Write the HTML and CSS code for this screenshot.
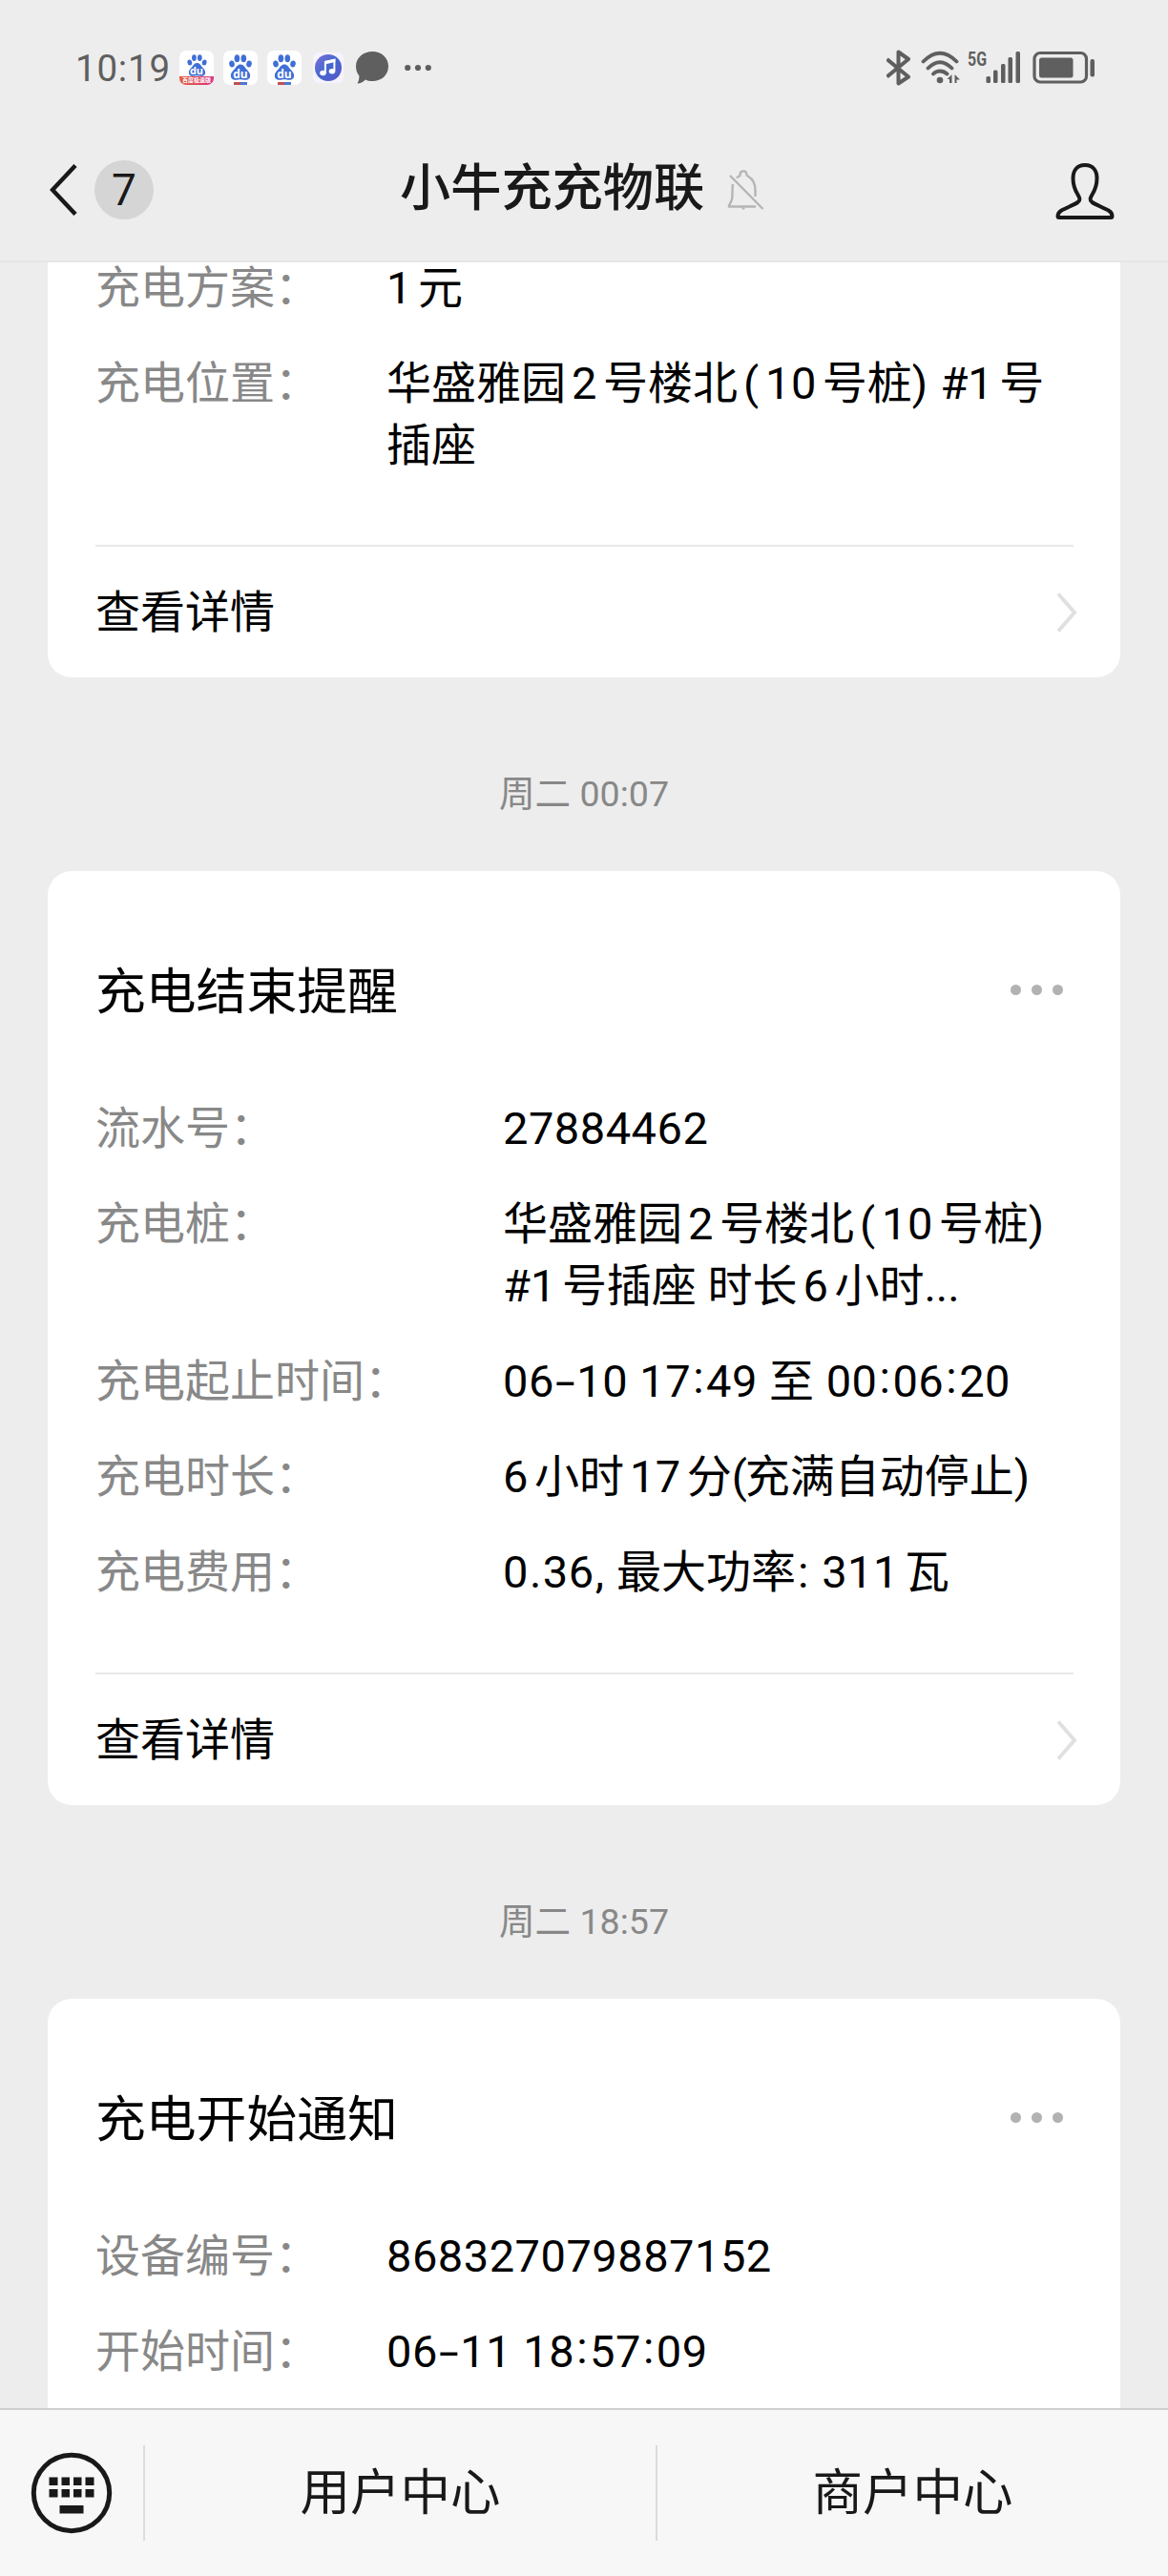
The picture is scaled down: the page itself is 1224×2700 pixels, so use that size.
FILE: index.html
```html
<!DOCTYPE html>
<html lang="zh-CN">
<head>
<meta charset="utf-8">
<title>小牛充充物联</title>
<link rel="stylesheet" href="styles.css">
</head>
<body>
<svg class="defs" aria-hidden="true">
  <symbol id="paw" viewBox="0 0 24 27">
    <g fill="#3f6fd6">
      <ellipse cx="3" cy="10" rx="2.8" ry="3.6" transform="rotate(-12 3 10)"/>
      <ellipse cx="8.4" cy="4.2" rx="2.8" ry="4"/>
      <ellipse cx="15.3" cy="4.2" rx="2.8" ry="4"/>
      <ellipse cx="21" cy="10" rx="2.8" ry="3.6" transform="rotate(12 21 10)"/>
      <path d="M12 10.500c3 0 4.300 2.600 6 4.700 2 2.200 4.200 4 4.200 7 0 3-2.200 4.800-5 4.600-2-.1-3.500-.6-5.200-.6s-3.200.5-5.200.6c-2.800.2-5-1.600-5-4.600 0-3 2.200-4.800 4.200-7 1.700-2.100 3-4.700 6-4.700z"/>
    </g>
  </symbol>
  <symbol id="chev" viewBox="0 0 22 42"><path d="M2 1.500 19 21 2 40.500" fill="none" stroke="#e0e0e0" stroke-width="4"/></symbol>
</svg>
<div class="screen">
  <div class="status">
    <span class="clock">10:19</span>
    <span class="app app-promo"><svg class="paw"><use href="#paw"/></svg><b class="du">du</b><i class="ribbon">百度极速版</i></span>
    <span class="app"><svg class="paw"><use href="#paw"/></svg><b class="du">du</b><i class="stripe"></i></span>
    <span class="app"><svg class="paw"><use href="#paw"/></svg><b class="du">du</b><i class="stripe"></i></span>
    <svg class="music" width="32" height="32" viewBox="0 0 32 32">
      <defs><linearGradient id="mg" x1="0" y1="0" x2="1" y2="1"><stop offset="0" stop-color="#7c6fd8"/><stop offset=".5" stop-color="#4468cf"/><stop offset="1" stop-color="#5b55cc"/></linearGradient></defs>
      <rect width="32" height="32" rx="6" fill="#f6f3fc"/><circle cx="16" cy="16" r="14" fill="url(#mg)"/>
      <g fill="#fff"><ellipse cx="10.500" cy="21.500" rx="3.300" ry="2.700"/><ellipse cx="20" cy="19.800" rx="3.300" ry="2.700"/></g>
      <path d="M12.900 21.500V10L22.400 8v11.500" fill="none" stroke="#fff" stroke-width="2"/><path d="M12 9l11.400-2.400v3.400L12 12.400z" fill="#fff"/>
    </svg>
    <svg class="bubble" width="34" height="34" viewBox="0 0 34 34"><path d="M17.500 0C27 0 34 6.500 34 15.500S27 31 17.500 31c-3 0-5.400-.6-7.500-1.600C8 31.500 5 33.500 1.500 33.500 3 31 3.500 28 3.400 25.500 1.200 22.800 0 19.300 0 15.500 0 6.500 7.500 0 17.500 0z" fill="#5f5f5f"/></svg>
    <svg class="more" width="28" height="8" viewBox="0 0 28 8" fill="#5f5f5f"><circle cx="3.200" cy="4" r="3.100"/><circle cx="14" cy="4" r="3.100"/><circle cx="24.800" cy="4" r="3.100"/></svg>
    <svg class="radio" width="218" height="38" viewBox="929 52 218 38" fill="none" stroke="#5f5f5f">
      <path d="M929.500 62 952 80.500 941.500 87.500V54.500L952 62 929.500 80.500" stroke-width="4" stroke-linejoin="round"/>
      <path d="M967.500 64.500C979 53 991 53 1002.500 64.500M972.500 71.500C981 63 989 63 997.500 71.500M978 77.500C982 73.500 988 73.500 992.500 77.500" stroke-width="3.800" stroke-linecap="round"/>
      <g fill="#5f5f5f" stroke="none">
        <circle cx="985" cy="84" r="3.300"/>
        <path d="M997.500 78v9h-2.500v-4h-2.500zM1000.500 78v9h2v-3.500h3.500z"/>
        <text class="gen" x="1014" y="69" textLength="20" lengthAdjust="spacingAndGlyphs">5G</text>
        <rect x="1033.500" y="80" width="4.500" height="7" rx="1.500"/><rect x="1041" y="73.500" width="4.500" height="13.500" rx="1.500"/><rect x="1049" y="67" width="4.500" height="20" rx="1.500"/><rect x="1056.500" y="60" width="4.500" height="27" rx="1.500"/><rect x="1064.500" y="54" width="4.500" height="33" rx="1.500"/>
        <rect x="1089" y="60.500" width="35.500" height="21" rx="2.500"/><rect x="1142.500" y="62" width="4.500" height="18.500" rx="2"/>
      </g>
      <rect x="1084" y="55.500" width="54.500" height="30.500" rx="6" stroke-width="3.200"/>
    </svg>
  </div>
  <div class="navbar">
    <div class="back">
      <svg width="30" height="54" viewBox="0 0 30 54"><path d="M27 1.500 3 27l24 25.500" fill="none" stroke="#191919" stroke-width="4.500"/></svg>
      <span class="badge">7</span>
    </div>
    <div class="name">小牛充充物联</div>
    <svg class="bell" width="40" height="44" viewBox="0 0 40 44" fill="none" stroke="#b5b5b5" stroke-width="2.400">
      <path d="M10 9.500C12 7.500 13.500 7.500 13.500 6.500 13.500 1 20.500 1 20.500 6.500 20.500 8 29.500 9 29.500 22v7M6 16c-.8 5-.3 10-.8 15C4.500 35 2 37 2 39.500h28M3 7l34.500 35"/><path d="M14.500 40.500h5L17 43z" fill="#b5b5b5" stroke="none"/>
    </svg>
    <svg class="user" width="62" height="60" viewBox="0 0 62 60"><path d="M31 3C22 3 18.500 9.500 18.500 17c0 9 2.500 13 5 17 2 3.500 3 5.500 0 8C20 44.500 12 47.500 6.500 50.500 3 52.500 2.500 54 2.500 56.500q0 1.500 1.500 1.500h54q1.500 0 1.500-1.500c0-2.500-.5-4-4-6C50 47.500 42 44.500 38.500 42c-3-2.500-2-4.500 0-8 2.500-4 5-8 5-17C43.500 9.500 40 3 31 3z" fill="none" stroke="#191919" stroke-width="4"/></svg>
  </div>
  <div class="chat">
    <div class="card card-cut">
      <div class="rows">
        <div class="k">充电方案：</div><div class="v"><span class="n0">1</span>元</div>
        <div class="k">充电位置：</div><div class="v">华盛雅园<span class="n">2</span>号楼北<span class="p">(</span><span class="n1">10</span>号桩<span class="q">)</span> #<span class="n0">1</span>号<br>插座</div>
      </div>
      <div class="detail"><span>查看详情</span><svg width="22" height="42"><use href="#chev"/></svg></div>
    </div>
    <div class="time">周二 00:07</div>
    <div class="card">
      <div class="head"><span class="title">充电结束提醒</span><span class="dots"><i></i><i></i><i></i></span></div>
      <div class="rows wide">
        <div class="k">流水号：</div><div class="v d">27884462</div>
        <div class="k">充电桩：</div><div class="v">华盛雅园<span class="n">2</span>号楼北<span class="p">(</span><span class="n1">10</span>号桩)<br>#<span class="n0">1</span>号插座 时长<span class="n">6</span>小时...</div>
        <div class="k">充电起止时间：</div><div class="v d">06<span class="hy">-</span>10 17<span class="co">:</span>49 至 00<span class="co">:</span>06<span class="co">:</span>20</div>
        <div class="k">充电时长：</div><div class="v"><span class="n0">6</span>小时<span class="n">17</span>分<span class="t">(</span>充满自动停止<span class="t">)</span></div>
        <div class="k">充电费用：</div><div class="v"><span class="d">0<span class="pt">.</span>36<span class="pt">,</span></span> 最大功率<span class="pt2">:</span> <span class="n0">311</span>瓦</div>
      </div>
      <div class="detail"><span>查看详情</span><svg width="22" height="42"><use href="#chev"/></svg></div>
    </div>
    <div class="time">周二 18:57</div>
    <div class="card">
      <div class="head"><span class="title">充电开始通知</span><span class="dots"><i></i><i></i><i></i></span></div>
      <div class="rows">
        <div class="k">设备编号：</div><div class="v d">868327079887152</div>
        <div class="k">开始时间：</div><div class="v d">06<span class="hy">-</span>11 18<span class="co">:</span>57<span class="co">:</span>09</div>
      </div>
    </div>
  </div>
  <div class="tabbar">
    <div class="kbd"><svg width="86" height="86" viewBox="0 0 86 86"><circle cx="43" cy="43" r="39.700" fill="none" stroke="#191919" stroke-width="5"/><path d="M19.500 26.500h9v8.500h-9zM32.500 26.500h8.500v8.500h-8.500zM45 26.500h8.500v8.500H45zM57.500 26.500h9v8.500h-9zM19.500 39h9v8.500h-9zM32.500 39h8.500v8.500h-8.500zM45 39h8.500v8.500H45zM57.500 39h9v8.500h-9zM30.500 56h25v8.500h-25z" fill="#191919"/></svg></div>
    <div class="tab">用户中心</div>
    <div class="tab">商户中心</div>
  </div>
</div>
</body>
</html>
```
FILE: styles.css
```css
* { box-sizing: border-box; }
body { margin: 0; }
.defs { position: absolute; width: 0; height: 0; }
.screen {
  width: 1224px; height: 2700px; overflow: hidden;
  display: flex; flex-direction: column;
  background: #ededed; color: #000;
  font: 47px/65px Roboto, "Noto Sans CJK SC", sans-serif;
  text-autospace: no-autospace; text-spacing-trim: space-all;
}
.screen svg { display: block; flex: none; }

/* status bar */
.status { height: 142px; flex: none; display: flex; align-items: center; padding: 0 77px 0 79px; color: #5f5f5f; }
.clock { width: 109px; font-size: 38.5px; letter-spacing: .8px; white-space: nowrap; }
.app { position: relative; width: 36px; height: 36px; margin-right: 10px; border-radius: 7px; background: #fff; overflow: hidden; display: flex; flex-direction: column; align-items: center; padding-top: 4px; }
.paw { width: 24px; height: 27px; }
.du { position: absolute; left: 0; right: 0; top: 18px; text-align: center; font: 700 12px/14px "Open Sans", sans-serif; color: #fff; }
.stripe { width: 14px; height: 3px; margin-top: 2px; background: linear-gradient(90deg, #c05050 50%, #4878d8 50%); }
.app-promo .paw { width: 21px; height: 23px; }
.app-promo .du { top: 14px; font-size: 11px; }
.ribbon { position: absolute; left: 0; right: 0; bottom: 0; height: 9px; background: linear-gradient(90deg, #e0603c, #df4060 60%, #d83a90); color: #fff; font: 700 6px/8px "Noto Sans CJK SC", sans-serif; text-align: center; white-space: nowrap; }
.music { margin-left: 2px; }
.bubble { margin-left: 13px; }
.more { margin-left: 17px; }
.radio { margin-left: auto; }
.gen { font: 700 21px Roboto, sans-serif; }

/* navigation bar */
.navbar { height: 133px; flex: none; display: flex; align-items: flex-start; padding: 0 56px 0 52px; border-bottom: 2px solid #e5e5e5; color: #191919; }
.back { width: 367px; height: 114px; display: flex; align-items: center; gap: 17px; }
.badge { width: 62px; height: 62px; border-radius: 50%; background: #d5d5d5; text-align: center; font-size: 46px; line-height: 63px; }
.name { font-size: 53.2px; font-weight: 500; line-height: 113px; white-space: nowrap; }
.bell { margin: 35px 0 0 24px; }
.user { margin: 28px 0 0 auto; }

/* conversation */
.chat { flex: 1; min-height: 0; overflow: hidden; padding: 0 50px; }
.card { background: #fff; border-radius: 25px; padding: 0 50px; }
.card-cut { display: flow-root; border-radius: 0 0 25px 25px; height: 435px; }
.rows { display: grid; grid-template-columns: 305px 1fr; row-gap: 35px; padding-bottom: 73px; }
.card-cut .rows { margin-top: -6px; padding-bottom: 72px; }
.rows.wide { grid-template-columns: 427px 1fr; }
.k { color: #888; white-space: nowrap; }
.v { white-space: nowrap; }
.d, .n, .n0, .n1 { letter-spacing: .5px; }
.n { margin: 0 6px; }
.n0 { margin-right: 6px; }
.n1 { margin: 0 6px 0 7px; }
.p { margin-left: 6px; }
.q { margin-right: 1.5px; }
.t { margin-right: -2px; }
.pt { margin: 0 1px; }
.pt2 { margin: 0 2px; }
.co { margin: 0 2px; vertical-align: 4px; line-height: 1; }
.hy { display: inline-block; margin: 0 5px; line-height: 1; transform: scaleX(1.6); }
.head { display: flex; align-items: center; justify-content: space-between; height: 237px; padding: 12px 10px 0 0; font-size: 52.8px; }
.title { padding-top: 5px; }
.dots { display: flex; gap: 11px; }
.dots i { width: 11px; height: 11px; border-radius: 50%; background: #b2b2b2; }
.detail { display: flex; align-items: center; justify-content: space-between; height: 139px; border-top: 2px solid #e9e9e9; margin-right: -1px; }
.detail svg { margin-right: -4px; }
.time { height: 203px; padding-top: 90px; text-align: center; color: #888; font-size: 37.6px; line-height: 64px; }

/* bottom menu */
.tabbar { height: 176px; flex: none; display: flex; align-items: center; background: #f7f7f7; border-top: 2px solid #cfcfcf; color: #191919; }
.kbd { width: 150px; padding-left: 32px; }
.tab { flex: 1; height: 100px; border-left: 2px solid #dcdcdc; text-align: center; font-size: 52.5px; line-height: 101px; }
```
